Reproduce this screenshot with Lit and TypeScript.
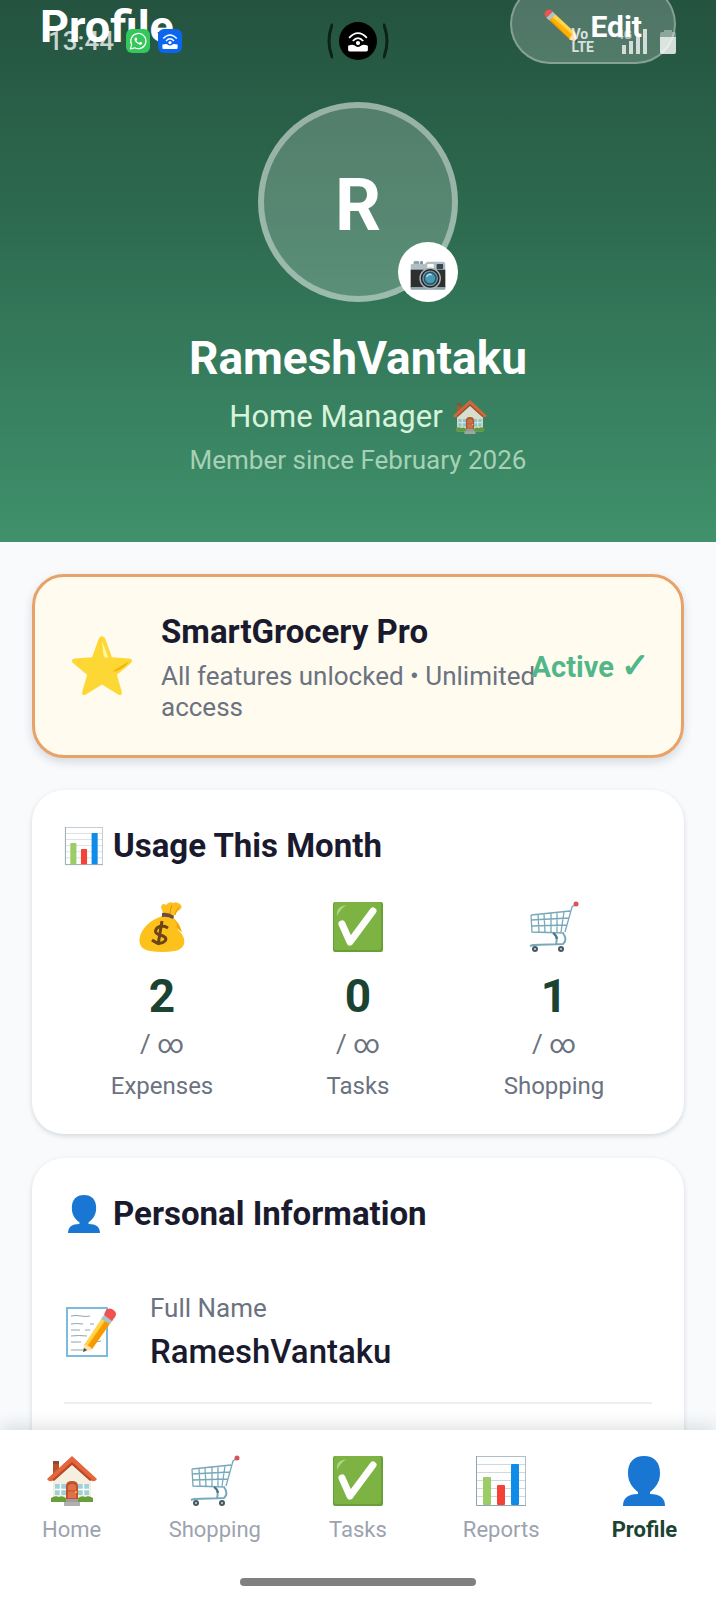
import { LitElement, css, html, svg, TemplateResult } from "lit";
import { customElement, property } from "lit/decorators.js";
import { classMap } from "lit/directives/class-map.js";

interface UsageStat {
	icon: string;
	value: number;
	label: string;
}

interface NavItem {
	icon: string;
	label: string;
	active?: boolean;
}

const ICONS: Record<string, TemplateResult> = {
	pencil: svg`
		<path d="M3 12 L12 4 L17 10 L8 17 Z" fill="#b0bec5"/>
		<path d="M2 11 Q-1 5 4 2 Q9 -1 13 4 L4 13 Z" fill="#ef5350"/>
		<path d="M4 13 L13 4 L17 8 L8 17 Z" fill="#a9c4ca"/>
		<path d="M8 17 L11 14 L41 43 L38 45 Z" fill="#f59a00"/>
		<path d="M10 15 L15 10 L45 38 L39 44 Z" fill="#ffb300"/>
		<path d="M13 12 L17 8 L46 35 L44 40 Z" fill="#ffd54f"/>
		<path d="M37 45 Q41 36 46 35 L49 49 Z" fill="#ffe0b2"/>
		<path d="M45 48 L48 44 L49 49 Z" fill="#37474f"/>`,
	camera: svg`
		<rect x="5" y="7" width="8" height="6" rx="2" fill="#90a4ae"/>
		<rect x="14" y="7" width="4" height="5" rx="2" fill="#78909c"/>
		<path d="M3 11 H20 L24 8 H46 Q49 8 49 12 V44 H1 V13 Q1 11 3 11 Z" fill="#b0bec5"/>
		<rect x="1" y="19" width="48" height="25" fill="#2f2f2f"/>
		<rect x="1" y="43" width="48" height="4" rx="1" fill="#90a4ae"/>
		<rect x="24" y="11" width="9" height="6" rx="1" fill="#fffde7"/>
		<rect x="37" y="11" width="9" height="7" rx="1" fill="#37474f"/>
		<circle cx="28" cy="31" r="15" fill="#a7b4ba"/>
		<circle cx="28" cy="31" r="13" fill="#212121"/>
		<circle cx="28" cy="31" r="11" fill="#78909c"/>
		<circle cx="28" cy="31" r="9" fill="#1f5566"/>
		<circle cx="28" cy="31" r="7" fill="#4a9ab5"/>
		<path d="M23 29 Q25 24 30 26" stroke="#b3e5fc" stroke-width="2" fill="none"/>`,
	house: svg`
		<path d="M6 5 H12 V20 L6 24 Z" fill="#b5532d"/>
		<path d="M6 5 H12 V8 H6 Z" fill="#8d4a31"/>
		<path d="M6 25 L25 7 L44 25 V46 H6 Z" fill="#f5efdf"/>
		<rect x="8" y="28" width="11" height="11" fill="#9fd0d6"/>
		<path d="M13.500 28 V39 M8 33.500 H19" stroke="#fff" stroke-width="1.500"/>
		<rect x="31" y="28" width="11" height="11" fill="#9fd0d6"/>
		<path d="M36.500 28 V39 M31 33.500 H42" stroke="#fff" stroke-width="1.500"/>
		<path d="M4 46 V42 Q8 39 12 41 Q16 39 20 43 V46 Z" fill="#689f38"/>
		<path d="M30 46 V43 Q34 39 38 41 Q42 39 46 42 V46 Z" fill="#689f38"/>
		<path d="M19 43 V30 Q19 25 25 25 Q31 25 31 30 V43 Z" fill="#c1502d"/>
		<path d="M21 42 V31 Q21 28 25 28 Q29 28 29 31 V42 Z" fill="#e0714a"/>
		<path d="M21 35 H29" stroke="#c1502d"/>
		<circle cx="29" cy="36" r="1" fill="#ffca28"/>
		<path d="M19 43 H31 V50 H17 V46 H19 Z" fill="#9e9e9e"/>
		<path d="M17 46 H33 V50 H17 Z" fill="#b0b0b0"/>
		<path d="M25 0 L50 23 Q48 26 45 25 L25 7 L5 25 Q2 26 0 23 Z" fill="#e8643a"/>
		<path d="M25 6 L45 24 L43 25 L25 9 L7 25 L5 24 Z" fill="#b5482a"/>`,
	star: svg`
		<path d="M25 1 Q27 1 28 4 L33 18 L47 19 Q51 20 48 23 L37 32 L41 46 Q41 50 38 48 L25 40 L12 48 Q9 50 9 46 L13 32 L2 23 Q-1 20 3 19 L17 18 L22 4 Q23 1 25 1 Z" fill="#fdd835"/>
		<path d="M25 5 Q28 12 30 18 Q27 20 26 15 Z" fill="#fff59d"/>
		<path d="M34 29 L47 21 Q44 26 37 29 Q33 30 34 29 Z" fill="#f4b400"/>`,
	chart: svg`
		<rect x="0.500" y="0.500" width="49" height="49" fill="#fff" stroke="#b0bec5"/>
		<path d="M1 8.500 H49 M1 16.500 H49 M1 24.500 H49 M1 32.500 H49 M1 40.500 H49" stroke="#cfd8dc"/>
		<path d="M0.500 0 V49.500 H50" stroke="#90a4ae" fill="none"/>
		<rect x="7" y="21" width="8" height="28" rx="1" fill="#9ccc65"/>
		<rect x="21" y="29" width="8" height="20" rx="1" fill="#f44336"/>
		<rect x="35" y="8" width="8" height="41" rx="1" fill="#0f8ce9"/>`,
	money: svg`
		<path d="M26 15 Q26 9 24 5 Q25 0 29 3 Q32 -1 36 1 Q40 -1 44 3 Q46 6 41 9 Q37 12 36 17 Z" fill="#fdbf1e"/>
		<path d="M33 13 Q33 7 35 3 M38 13 Q39 8 42 5" stroke="#e59600" fill="none"/>
		<path d="M25 14 Q8 20 3 34 Q0 47 13 49 Q25 51 38 49 Q49 46 47 37 Q46 32 41 28 Q40 19 36 15 Z" fill="#fcc21b"/>
		<path d="M36 16 Q40 20 40 26 Q43 29 45 30 Q42 20 36 16 Z" fill="#f2a600"/>
		<path d="M25 11 Q31 10 37 14 L36 17 Q30 14 25 15 Z" fill="#6d4c41"/>
		<path d="M31 26 Q25 22 20 26 Q16 31 23 33 Q31 35 28 39 Q23 44 15 38 M25 19 L21 43" stroke="#6d4417" stroke-width="3" fill="none"/>`,
	check: svg`
		<rect width="50" height="50" rx="2" fill="#689f38"/>
		<rect x="1" y="0" width="47" height="48" rx="2" fill="#7cb342"/>
		<path d="M4 11 Q4 4 14 3 Q8 6 4 14 Z" fill="#aed581"/>
		<path d="M9 22 L17 40 L40 9" stroke="#fff" stroke-width="7" stroke-linecap="round" stroke-linejoin="round" fill="none"/>`,
	cart: svg`
		<path d="M47 2 L43 5 L36 30 M2 13 L41 9 M2 13 L3 30 L35 31 M2 18 L40 16 M3 24 L38 23 M9 12 L10 30 M15 12 L16 30 M22 11 L22 30 M28 11 L28 30 M35 10 L32 30" stroke="#78a9bb" fill="none" stroke-width="1.300"/>
		<path d="M25 31 Q29 35 27 42 M34 31 Q39 38 34 42 L4 43 L1 44" stroke="#78a9bb" stroke-width="2" fill="none"/>
		<path d="M24 31 Q28 34 28 37" stroke="#4d7484" stroke-width="2" fill="none"/>
		<circle cx="6" cy="47" r="3" fill="#455a64"/>
		<circle cx="6" cy="47" r="1" fill="#cfd8dc"/>
		<circle cx="32" cy="47" r="3" fill="#455a64"/>
		<circle cx="32" cy="47" r="1" fill="#cfd8dc"/>
		<circle cx="47" cy="2" r="2.500" fill="#d9535b"/>`,
	person: svg`
		<path d="M25 0 C35 0 41 6 41 17 C41 27 36 32 31 36 V38 Q46 38 46 50 H4 Q4 38 19 38 V36 C14 32 9 27 9 17 C9 6 15 0 25 0 Z" fill="#1976d2"/>`,
	memo: svg`
		<rect x="1" y="1" width="40" height="48" fill="#fff" stroke="#7dbbdc" stroke-width="2"/>
		<path d="M5 9 Q10 8 15 9 T24 9 M5 17 Q10 16 17 17 M24 17 H28 M5 23 H14 M19 23 H24 M5 29 Q12 28 21 29 M5 35 H15 M29 35 L35 34 M5 43 H17" stroke="#90a4ae" fill="none"/>
		<path d="M18 40 L37 10 L45 15 L26 42 L17 45 Z" fill="#ffb300"/>
		<path d="M22 39 L41 12 L45 15 L26 42 Z" fill="#f59a00"/>
		<path d="M18 38 L36 11 L39 13 L21 39 Z" fill="#ffd54f"/>
		<path d="M18 38 Q23 38 26 42 L17 45 Z" fill="#ffe0b2"/>
		<path d="M17 45 L18 41 L21 43 Z" fill="#37474f"/>
		<path d="M35 12 L38 8 L47 13 L44 17 Z" fill="#a9c4ca"/>
		<path d="M38 8 Q40 0 46 2 Q52 5 49 10 L46 14 Z" fill="#ef5350"/>`,
	hotspot: svg`
		<path d="M8 19 Q25 1 42 19 M15 25 Q25 14 35 25" stroke="currentColor" stroke-width="3.500" fill="none"/>
		<circle cx="25" cy="29" r="4" fill="currentColor"/>
		<path d="M6 34 Q14 31 18 33 Q25 40 32 33 Q36 31 44 34 V43 Q44 45 41 45 H9 Q6 45 6 43 Z" fill="currentColor"/>`,
	chat: svg`
		<path d="M6 45 L9 34 A19 19 0 1 1 17 42 Z" stroke="#fff" stroke-width="3" fill="none" stroke-linejoin="round"/>
		<path d="M19 16 Q21 15 22 18 L23 20 Q23 22 21 23 Q23 28 28 30 Q30 27 31 27 L35 29 Q37 30 34 33 Q31 36 25 32 Q17 27 16 21 Q16 18 19 16 Z" fill="#fff"/>`,
};

@customElement("emoji-icon")
export class EmojiIcon extends LitElement {

	@property()
	name = ""

	render() {
		return html`<svg viewBox="0 0 50 50" aria-hidden="true">${ ICONS[this.name] }</svg>`
	}

	static styles = css`
		:host {
			display: inline-block;
			flex: none;
			width: 50px;
			height: 50px;
		}
		svg {
			display: block;
			width: 100%;
			height: 100%;
			overflow: visible;
		}
	`;
}

@customElement("status-bar")
export class StatusBar extends LitElement {

	render() {
		return html`
			<div class="side">
				<span class="time">13:44</span>
				<span class="app chat"><emoji-icon name="chat"></emoji-icon></span>
				<span class="app share"><emoji-icon name="hotspot"></emoji-icon></span>
			</div>
			<div class="cutout">
				<svg class="wave" viewBox="0 0 6 36"><path d="M5 2 Q-1 18 5 34"/></svg>
				<span class="lens"><emoji-icon name="hotspot"></emoji-icon></span>
				<svg class="wave" viewBox="0 0 6 36"><path d="M1 2 Q7 18 1 34"/></svg>
			</div>
			<div class="side end">
				<span class="volte"><span>Vo</span><span>LTE</span></span>
				<span class="mobile">
					<span class="network">4G</span>
					<svg class="signal" viewBox="0 0 26 25">
						<path d="M0 16 H4 V25 H0 Z M7 12 H11 V25 H7 Z M14 7 H18 V25 H14 Z M21 0 H25 V25 H21 Z"/>
					</svg>
				</span>
				<svg class="battery" viewBox="0 0 16 25">
					<path class="shell" d="M4 1 H12 V3 H14 Q16 3 16 5 V8 H0 V5 Q0 3 2 3 H4 Z"/>
					<path d="M0 8 H16 V23 Q16 25 14 25 H2 Q0 25 0 23 Z"/>
				</svg>
			</div>
		`
	}

	static styles = css`
		:host {
			display: grid;
			grid-template-columns: 1fr auto 1fr;
			align-items: center;
			padding: 0 40px 0 48px;
			height: 82px;
			box-sizing: border-box;
			pointer-events: none;
		}
		.side {
			display: flex;
			align-items: center;
			gap: 8px;
		}
		.end {
			justify-content: flex-end;
			gap: 12px;
		}
		.time {
			font-size: 26px;
			font-weight: 500;
			color: rgba(255, 255, 255, 0.75);
			margin-right: 4px;
		}
		.app {
			display: grid;
			place-items: center;
			width: 24px;
			height: 24px;
			border-radius: 6px;
			color: white;
		}
		.app emoji-icon {
			width: 20px;
			height: 20px;
		}
		.chat {
			background-color: #34c759;
		}
		.share {
			background-color: #0a66f0;
		}
		.cutout {
			display: flex;
			align-items: center;
			gap: 6px;
			margin-right: 8px;
		}
		.lens {
			display: grid;
			place-items: center;
			width: 38px;
			height: 38px;
			border-radius: 50%;
			background-color: black;
			color: white;
		}
		.lens emoji-icon {
			width: 26px;
			height: 26px;
		}
		.wave {
			width: 6px;
			height: 36px;
			fill: none;
			stroke: #0b2318;
			stroke-width: 3;
			stroke-linecap: round;
		}
		.volte {
			display: flex;
			flex-direction: column;
			margin-right: 16px;
			font-size: 14px;
			line-height: 13px;
			font-weight: 700;
			color: rgba(255, 255, 255, 0.8);
		}
		.mobile {
			position: relative;
			display: flex;
		}
		.network {
			position: absolute;
			top: 0;
			right: 16px;
			font-size: 12px;
			line-height: 12px;
			font-weight: 700;
			color: rgba(255, 255, 255, 0.6);
		}
		.signal {
			width: 26px;
			height: 25px;
			fill: rgba(255, 255, 255, 0.75);
		}
		.battery {
			width: 16px;
			height: 25px;
			fill: rgba(255, 255, 255, 0.8);
		}
		.battery .shell {
			fill: rgba(255, 255, 255, 0.35);
		}
	`;
}

@customElement("app-root")
export class AppRoot extends LitElement {

	stats: UsageStat[] = [
		{ icon: "money", value: 2, label: "Expenses" },
		{ icon: "check", value: 0, label: "Tasks" },
		{ icon: "cart", value: 1, label: "Shopping" },
	]

	navItems: NavItem[] = [
		{ icon: "house", label: "Home" },
		{ icon: "cart", label: "Shopping" },
		{ icon: "check", label: "Tasks" },
		{ icon: "chart", label: "Reports" },
		{ icon: "person", label: "Profile", active: true },
	]

	_renderStat(stat: UsageStat) {
		return html`
			<div class="stat">
				<emoji-icon name=${ stat.icon }></emoji-icon>
				<span class="value">${ stat.value }</span>
				<span class="limit">/ ∞</span>
				<span class="stat-label">${ stat.label }</span>
			</div>
		`
	}

	_renderNavItem(item: NavItem) {
		return html`
			<a href="#" class=${ classMap({ tab: true, active: !!item.active }) }>
				<emoji-icon name=${ item.icon }></emoji-icon>
				<span>${ item.label }</span>
			</a>
		`
	}

	render() {
		return html`
			<status-bar class="status"></status-bar>
			<main class="scroll">
				<header class="header">
					<div class="top">
						<h1 class="page-title">Profile</h1>
						<button class="edit"><emoji-icon name="pencil"></emoji-icon>Edit</button>
					</div>
					<div class="avatar">
						R
						<button class="photo" aria-label="Change photo"><emoji-icon name="camera"></emoji-icon></button>
					</div>
					<h2 class="name">RameshVantaku</h2>
					<p class="role">Home Manager <emoji-icon name="house"></emoji-icon></p>
					<p class="since">Member since February 2026</p>
				</header>

				<div class="content">
					<section class="card pro">
						<emoji-icon name="star"></emoji-icon>
						<div class="info">
							<h3 class="pro-title">SmartGrocery Pro</h3>
							<p class="pro-text">All features unlocked • Unlimited access</p>
						</div>
						<span class="state">Active <span class="tick">✓</span></span>
					</section>

					<section class="card">
						<h3 class="card-title"><emoji-icon name="chart"></emoji-icon>Usage This Month</h3>
						<div class="stats">${ this.stats.map(stat => this._renderStat(stat)) }</div>
					</section>

					<section class="card personal">
						<h3 class="card-title"><emoji-icon name="person"></emoji-icon>Personal Information</h3>
						<div class="row">
							<emoji-icon name="memo"></emoji-icon>
							<div class="field">
								<span class="field-label">Full Name</span>
								<span class="field-value">RameshVantaku</span>
							</div>
						</div>
					</section>
				</div>
			</main>

			<nav class="nav">
				<div class="tabs">${ this.navItems.map(item => this._renderNavItem(item)) }</div>
				<div class="handle"></div>
			</nav>
		`
	}

	static styles = css`
		:host {
			display: flex;
			flex-direction: column;
			position: relative;
			height: 100vh;
			overflow: hidden;
			font-family: Roboto, "Noto Sans", sans-serif;
			color: #1a1a2e;
			background-color: #f8fafc;
		}
		* {
			margin: 0;
			box-sizing: border-box;
		}
		button {
			font-family: inherit;
			cursor: pointer;
		}
		.status {
			position: absolute;
			top: 0;
			left: 0;
			right: 0;
			z-index: 2;
		}
		.scroll {
			flex: 1;
			min-height: 0;
			overflow-y: auto;
			scrollbar-width: none;
		}
		.header {
			display: flex;
			flex-direction: column;
			align-items: center;
			padding: 0 40px 66px;
			color: white;
			background: linear-gradient(#245340 0%, #2d6a4f 40%, #40916c 100%);
		}
		.top {
			display: flex;
			align-items: center;
			justify-content: space-between;
			align-self: stretch;
			margin-top: -16px;
			margin-bottom: 38px;
		}
		.page-title {
			font-size: 45px;
			line-height: 52px;
			font-weight: 700;
			padding-top: 6px;
		}
		.edit {
			display: flex;
			align-items: center;
			gap: 12px;
			height: 80px;
			padding: 4px 32px 0;
			border: 2px solid rgba(255, 255, 255, 0.3);
			border-radius: 40px;
			background-color: rgba(255, 255, 255, 0.2);
			color: white;
			font-size: 30px;
			font-weight: 700;
		}
		.edit emoji-icon {
			width: 34px;
			height: 34px;
		}
		.avatar {
			position: relative;
			display: grid;
			place-items: center;
			width: 200px;
			height: 200px;
			padding-top: 6px;
			border: 6px solid rgba(255, 255, 255, 0.4);
			border-radius: 50%;
			background-color: rgba(255, 255, 255, 0.2);
			font-size: 72px;
			font-weight: 700;
			margin-bottom: 28px;
		}
		.photo {
			position: absolute;
			right: -6px;
			bottom: -6px;
			display: grid;
			place-items: center;
			width: 60px;
			height: 60px;
			padding: 4px 0 0;
			border: none;
			border-radius: 50%;
			background-color: white;
		}
		.photo emoji-icon {
			width: 36px;
			height: 36px;
		}
		.name {
			font-size: 46px;
			line-height: 56px;
			font-weight: 700;
			margin-bottom: 12px;
		}
		.role {
			display: flex;
			align-items: center;
			gap: 10px;
			font-size: 31px;
			line-height: 38px;
			margin-bottom: 8px;
			color: #d8f3dc;
		}
		.role emoji-icon {
			width: 34px;
			height: 34px;
			opacity: 0.85;
		}
		.since {
			font-size: 26px;
			line-height: 32px;
			color: rgba(216, 243, 220, 0.7);
		}
		.content {
			padding: 32px;
		}
		.card {
			padding: 32px;
			border-radius: 32px;
			background-color: white;
			box-shadow: 0 2px 5px rgba(30, 50, 60, 0.16);
			margin-bottom: 24px;
		}
		.pro {
			display: flex;
			align-items: center;
			gap: 28px;
			padding-left: 36px;
			border: 3px solid #e8a268;
			background-color: #fffbef;
			box-shadow: 0 4px 10px rgba(30, 50, 60, 0.16);
			margin-bottom: 32px;
		}
		.pro emoji-icon {
			width: 62px;
			height: 62px;
		}
		.info {
			flex: 1;
			min-width: 0;
		}
		.pro-title {
			font-size: 33px;
			line-height: 46px;
			font-weight: 700;
			margin-bottom: 6px;
		}
		.pro-text {
			font-size: 26px;
			line-height: 31px;
			color: #6b7280;
			margin-right: -40px;
		}
		.state {
			font-size: 29px;
			line-height: 32px;
			font-weight: 700;
			color: #52b788;
			white-space: nowrap;
			z-index: 1;
		}
		.tick {
			font-size: 34px;
		}
		.card-title {
			display: flex;
			align-items: center;
			gap: 10px;
			padding-left: 1px;
			font-size: 33px;
			line-height: 48px;
			font-weight: 700;
			margin-bottom: 24px;
		}
		.card-title emoji-icon {
			width: 38px;
			height: 38px;
		}
		.stats {
			display: grid;
			grid-template-columns: repeat(3, 1fr);
			padding-top: 8px;
		}
		.stat {
			display: flex;
			flex-direction: column;
			align-items: center;
		}
		.value {
			font-size: 46px;
			line-height: 56px;
			font-weight: 700;
			color: #1b4332;
			margin: 16px 0 4px;
		}
		.limit {
			font-size: 26px;
			line-height: 32px;
			color: #6b7280;
			margin-bottom: 10px;
		}
		.stat-label {
			font-size: 24px;
			line-height: 32px;
			color: #6b7280;
		}
		.personal {
			padding-bottom: 96px;
		}
		.row {
			display: flex;
			align-items: center;
			gap: 34px;
			padding: 30px 2px;
			border-bottom: 2px solid #eceef0;
		}
		.field {
			display: flex;
			flex-direction: column;
			gap: 8px;
		}
		.field-label {
			font-size: 26px;
			line-height: 32px;
			color: #6b7280;
		}
		.field-value {
			font-size: 33px;
			line-height: 40px;
			font-weight: 500;
		}
		.nav {
			position: relative;
			padding: 26px 0 14px;
			background-color: white;
			box-shadow: 0 -4px 16px rgba(30, 50, 60, 0.14);
		}
		.tabs {
			display: grid;
			grid-template-columns: repeat(5, 1fr);
			margin-bottom: 34px;
		}
		.tab {
			display: flex;
			flex-direction: column;
			align-items: center;
			gap: 10px;
			font-size: 22px;
			line-height: 28px;
			color: #9ca3af;
			text-decoration: none;
		}
		.tab.active {
			color: #1b4332;
			font-weight: 700;
		}
		.handle {
			width: 33%;
			height: 8px;
			margin: 0 auto;
			border-radius: 4px;
			background-color: #808080;
		}
	`;
}
